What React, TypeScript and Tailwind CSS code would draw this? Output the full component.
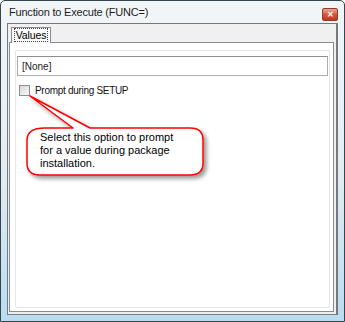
import React from "react";

export default function App() {
  return (
    <div className="w-[345px] h-[322px] bg-white" style={{ fontFamily: "'Liberation Sans', Arial, sans-serif" }}>
      <div className="relative w-[345px] h-[322px] border border-[#34454f] rounded-t-[5px] bg-gradient-to-b from-[#f3f6f8] via-[#e6edf2] to-[#b9dcf0] flex flex-col px-[6px] pb-[6px]">
        {/* Title bar */}
        <div className="h-[22px] flex items-start justify-between pl-[2px]">
          <span className="mt-[5px] text-[11px] leading-[13px] text-[#1b1b1b] tracking-[-0.2px]">
            Function to Execute (FUNC=)
          </span>
          <div className="w-[16px] h-[13px] mt-[7px] rounded-[2px] border border-[#8b3c2c] bg-gradient-to-b from-[#eba58f] via-[#d4583c] to-[#c0391f] flex items-center justify-center">
            <span className="text-[8px] leading-none text-white font-bold">✕</span>
          </div>
        </div>
        {/* Client */}
        <div className="flex-1 border-l border-t border-b border-r-2 border-[#727a80] bg-[#f0f0f0] flex flex-col pl-px pr-[2px] pb-[2px] pt-[3px]">
          <div className="flex h-[15px] relative z-10">
            <div className="ml-[2px] h-[16px] w-[40px] border border-b-0 border-[#898c95] bg-gradient-to-b from-white to-[#f7f7f7] flex items-start justify-center pt-[1px]">
              <span className="text-[10.5px] leading-[12px] text-black px-[1px] outline-1 outline-dotted outline-[#444] tracking-[-0.1px]">Values</span>
            </div>
          </div>
          <div className="flex-1 border border-[#898c95] bg-white pl-[5px] pr-[3px] pt-[7px] pb-[3px]">
            <div className="h-full border border-[#e2e7ec] rounded-[2px] flex flex-col px-px pt-[5px]">
              <div className="h-[20px] border border-[#abadb3] border-t-[#8e8f8f] flex items-center pl-[4px] text-[10px] text-[#222]">[None]</div>
              <div className="flex items-center mt-[9px] ml-[2px] gap-[5px]">
                <div className="w-[11px] h-[11px] border border-[#8e8f8f] bg-gradient-to-br from-[#d8d8d8] to-[#f8f8f8]" />
                <span className="text-[10px] leading-[11px] text-[#111] tracking-[-0.3px]">Prompt during SETUP</span>
              </div>
            </div>
          </div>
        </div>
        {/* Callout */}
        <svg className="absolute -left-px -top-px" width="345" height="322" viewBox="0 0 345 322">
          <defs>
            <filter id="sh" x="-20%" y="-20%" width="140%" height="160%">
              <feGaussianBlur in="SourceAlpha" stdDeviation="2" />
              <feOffset dx="3" dy="3" result="o" />
              <feComponentTransfer><feFuncA type="linear" slope="0.4" /></feComponentTransfer>
              <feMerge><feMergeNode /><feMergeNode in="SourceGraphic" /></feMerge>
            </filter>
          </defs>
          <path
            d="M 45 128 L 73 128 L 30 96 L 90 128 L 190 128 Q 203 128 203 140 L 203 163 Q 203 175 190 175 L 40 175 Q 27 175 27 163 L 27 140 Q 27 128 45 128 Z"
            fill="white"
            stroke="#ff0000"
            strokeWidth="1.5"
            strokeLinejoin="round"
            filter="url(#sh)"
          />
        </svg>
        <div className="absolute left-[39px] top-[130px] text-[11px] leading-[13px] text-black">
          <div>Select this option to prompt</div>
          <div>for a value during package</div>
          <div>installation.</div>
        </div>
      </div>
    </div>
  );
}
